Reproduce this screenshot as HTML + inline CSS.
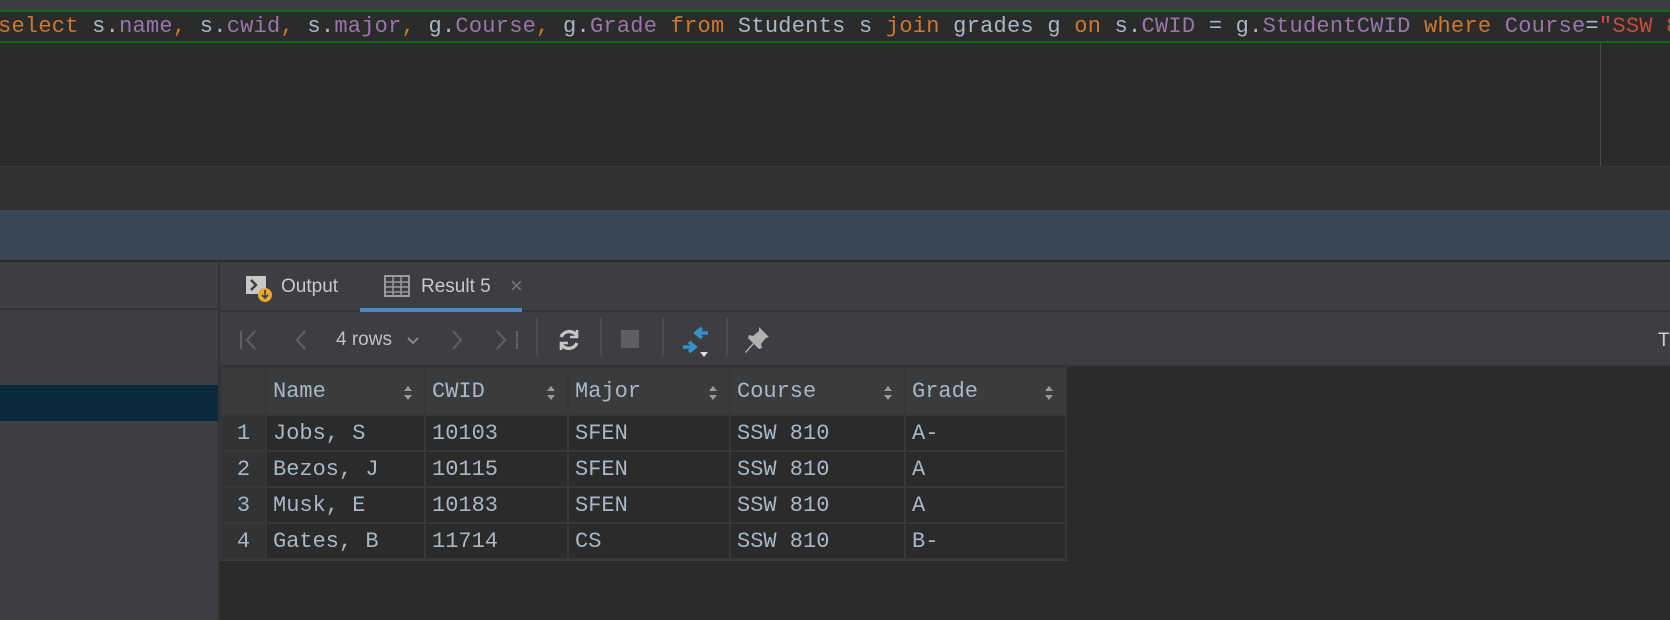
<!DOCTYPE html>
<html><head><meta charset="utf-8"><style>
*{margin:0;padding:0;box-sizing:border-box}
body{width:1670px;height:620px;overflow:hidden;background:#2b2b2b;position:relative;font-family:"Liberation Sans",sans-serif}
.abs{position:absolute}
.mono{font-family:"Liberation Mono",monospace;font-size:22px}
.code{left:-2px;top:10px;height:33px;width:1700px;border-top:2px solid #0f6b12;border-bottom:2px solid #0f6b12;background:#2b2b2b;line-height:30px;white-space:pre;color:#a9b7c6;letter-spacing:0.25px}
.k{color:#cc7832}.f{color:#9876aa}.s{color:#cc4a3f}
table{border-collapse:collapse;position:absolute;left:220px;top:367px}
td{height:36px;border:2px solid #353739;color:#a9b7c6;padding-left:6px;font-family:"Liberation Mono",monospace;font-size:22px;background:#2b2b2b;position:relative}
tr.h td{height:47px;background:#3a3b3d}
td.n{background:#313335;text-align:center;padding:0;color:#a9b7c6}
.sort{position:absolute;right:12px;top:17px;width:8px;height:14px}
.sort:before,.sort:after{content:"";position:absolute;left:0;border-left:4px solid transparent;border-right:4px solid transparent}
.sort:before{top:0;border-bottom:5px solid #999}
.sort:after{bottom:0;border-top:5px solid #999}
.sep{width:2px;height:38px;top:318px;background:#4a4c4e}
</style></head><body>
<div class="abs" style="left:0;top:0;width:1670px;height:10px;background:#3b3d40"></div>
<div class="abs code mono"><span class="k">select</span> s.<span class="f">name</span><span class="k">,</span> s.<span class="f">cwid</span><span class="k">,</span> s.<span class="f">major</span><span class="k">,</span> g.<span class="f">Course</span><span class="k">,</span> g.<span class="f">Grade</span> <span class="k">from</span> Students s <span class="k">join</span> grades g <span class="k">on</span> s.<span class="f">CWID</span> = g.<span class="f">StudentCWID</span> <span class="k">where</span> <span class="f">Course</span>=<span class="s">"SSW 810"</span></div>
<div class="abs" style="left:1600px;top:43px;width:1px;height:123px;background:#4a4a4a"></div>
<div class="abs" style="left:0;top:166px;width:1670px;height:44px;background:#2f3032;border-top:1px solid #363739"></div>
<div class="abs" style="left:0;top:210px;width:1670px;height:50px;background:#3a4754"></div>
<div class="abs" style="left:0;top:260px;width:1670px;height:2px;background:#2b2b2b"></div>
<div class="abs" style="left:0;top:262px;width:218px;height:358px;background:#3c3e41"></div>
<div class="abs" style="left:0;top:308px;width:218px;height:2px;background:#323335"></div>
<div class="abs" style="left:0;top:385px;width:218px;height:36px;background:#0d293e"></div>
<div class="abs" style="left:218px;top:262px;width:2px;height:358px;background:#323335"></div>
<div class="abs" style="left:220px;top:262px;width:1450px;height:49px;background:#3c3e41"></div>
<div class="abs" style="left:220px;top:310px;width:1450px;height:2px;background:#313335"></div>
<svg class="abs" style="left:245px;top:274px" width="30" height="30"><rect x="1" y="2" width="20" height="18" fill="#c8c8c8"/><path d="M6 6l5 5-5 5" stroke="#3c3e41" stroke-width="2.4" fill="none"/><circle cx="20" cy="21" r="7" fill="#e8a82a"/><path d="M20 16v8M17 21l3 3 3-3" stroke="#3c3e41" stroke-width="1.6" fill="none"/></svg>
<div class="abs" style="left:281px;top:276px;color:#c9c9c9;font-size:19px">Output</div>
<svg class="abs" style="left:384px;top:275px" width="26" height="22"><rect x="1" y="1" width="24" height="20" fill="none" stroke="#9a9a9a" stroke-width="2"/><path d="M1 7h24M1 12h24M1 17h24M9 1v20M17 1v20" stroke="#9a9a9a" stroke-width="1.5"/></svg>
<div class="abs" style="left:421px;top:276px;color:#c9c9c9;font-size:19px">Result 5</div>
<div class="abs" style="left:510px;top:273px;color:#777;font-size:22px">×</div>
<div class="abs" style="left:360px;top:308px;width:162px;height:4px;background:#4a88c7"></div>
<div class="abs" style="left:220px;top:312px;width:1450px;height:53px;background:#3c3e41"></div>
<div class="abs" style="left:220px;top:365px;width:1450px;height:2px;background:#313335"></div>
<svg class="abs" style="left:238px;top:328px" width="300" height="24" fill="none" stroke="#5d5f62" stroke-width="2.2"><path d="M3 3v18M17 3l-8 9 8 9"/><path d="M67 3l-8 9 8 9"/><path d="M215 3l8 9-8 9"/><path d="M259 3l8 9-8 9M279 3v18"/></svg>
<div class="abs" style="left:336px;top:329px;color:#c2c2c2;font-size:19px">4 rows</div>
<svg class="abs" style="left:406px;top:336px" width="14" height="10"><path d="M2 2l5 5 5-5" stroke="#8a8a8a" stroke-width="2" fill="none"/></svg>
<div class="abs sep" style="left:536px"></div>
<svg class="abs" style="left:555px;top:326px" width="28" height="28" fill="none" stroke="#c5c5c5" stroke-width="3.4"><path d="M22 10a9 9 0 0 0-16 1"/><path d="M6 18a9 9 0 0 0 16-1"/><path d="M22 4v7h-7M6 24v-7h7" stroke-width="2.6"/></svg>
<div class="abs sep" style="left:600px"></div>
<div class="abs" style="left:621px;top:330px;width:18px;height:18px;background:#5d5f61"></div>
<div class="abs sep" style="left:662px"></div>
<svg class="abs" style="left:680px;top:325px" width="32" height="34"><path d="M28 8h-10M22 3l-6 5 6 5" stroke="#3592c4" stroke-width="3.6" fill="none"/><path d="M3 22h10M9 17l6 5-6 5" stroke="#3592c4" stroke-width="3.6" fill="none"/><path d="M20 27h8l-4 5z" fill="#ddd"/></svg>
<div class="abs sep" style="left:726px"></div>
<svg class="abs" style="left:743px;top:325px" width="28" height="30"><path d="M16 2l10 10-3 1-5 6 1 4-3 1-5-5-8 9-1-1 8-9-5-5 1-3 4 1 6-5z" fill="#b0b0b0"/></svg>
<div class="abs" style="left:1658px;top:330px;color:#d0d0d0;font-size:19px">T</div>
<div class="abs" style="left:220px;top:367px;width:847px;height:194px;background:#3a3c3e"></div>
<table>
<tr class="h"><td class="n" style="width:45px"></td><td style="width:159px">Name<i class="sort"></i></td><td style="width:143px">CWID<i class="sort"></i></td><td style="width:162px">Major<i class="sort"></i></td><td style="width:175px">Course<i class="sort"></i></td><td style="width:161px">Grade<i class="sort"></i></td></tr>
<tr><td class="n">1</td><td>Jobs, S</td><td>10103</td><td>SFEN</td><td>SSW 810</td><td>A-</td></tr>
<tr><td class="n">2</td><td>Bezos, J</td><td>10115</td><td>SFEN</td><td>SSW 810</td><td>A</td></tr>
<tr><td class="n">3</td><td>Musk, E</td><td>10183</td><td>SFEN</td><td>SSW 810</td><td>A</td></tr>
<tr><td class="n">4</td><td>Gates, B</td><td>11714</td><td>CS</td><td>SSW 810</td><td>B-</td></tr>
</table>
</body></html>
